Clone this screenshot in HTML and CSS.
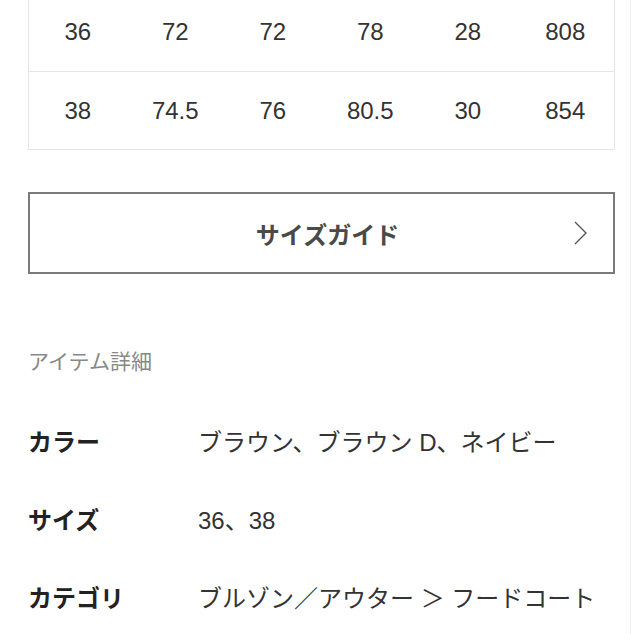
FILE: index.html
```html
<!DOCTYPE html>
<html lang="ja">
<head>
<meta charset="utf-8">
<link rel="stylesheet" href="styles.css">
</head>
<body>
<div class="page">
  <div class="size-table">
    <div class="row">
      <div class="cell">36</div><div class="cell">72</div><div class="cell">72</div><div class="cell">78</div><div class="cell">28</div><div class="cell">808</div>
    </div>
    <div class="row">
      <div class="cell">38</div><div class="cell">74.5</div><div class="cell">76</div><div class="cell">80.5</div><div class="cell">30</div><div class="cell">854</div>
    </div>
  </div>

  <div class="guide-btn">
    <span class="guide-label">サイズガイド</span>
    <svg class="chevron" width="13" height="24" viewBox="0 0 13 24"><path d="M1 1 L12 12 L1 23" fill="none" stroke="#555" stroke-width="1.4"/></svg>
  </div>

  <h2 class="section-title">アイテム詳細</h2>

  <div class="details">
    <div class="detail-row"><div class="label">カラー</div><div class="value">ブラウン、ブラウン D、ネイビー</div></div>
    <div class="detail-row"><div class="label">サイズ</div><div class="value">36、38</div></div>
    <div class="detail-row"><div class="label">カテゴリ</div><div class="value">ブルゾン／アウター ＞ フードコート</div></div>
  </div>
</div>
</body>
</html>
```

FILE: styles.css
```css
html, body {
  margin: 0;
  padding: 0;
  background: #fff;
}
body {
  font-family: "Liberation Sans", "Noto Sans CJK JP", sans-serif;
  color: #333;
  overflow: hidden;
}
.page {
  width: 631px;
  box-sizing: border-box;
  padding: 0 15px 0 28px;
  border-right: 1px solid #efefef;
  min-height: 634px;
}
.size-table {
  margin-top: -7px;
  border: 1px solid #e6e6e6;
  border-top: none;
}
.row {
  display: grid;
  grid-template-columns: repeat(6, 1fr);
  height: 78px;
  align-items: center;
}
.row + .row {
  border-top: 1px solid #e6e6e6;
  height: 77px;
}
.cell {
  text-align: center;
  font-size: 24px;
  color: #333;
}
.guide-btn {
  margin-top: 42px;
  height: 78px;
  border: 2px solid #7a7a7a;
  display: flex;
  align-items: center;
  justify-content: center;
  padding-left: 12px;
  position: relative;
}
.guide-label {
  font-family: "Noto Sans CJK JP", sans-serif;
  font-weight: bold;
  font-size: 24px;
  color: #4a4a4a;
}
.chevron {
  position: absolute;
  right: 26px;
  top: 27px;
}
.section-title {
  margin: 71px 0 0;
  font-family: "Noto Sans CJK JP", sans-serif;
  font-weight: normal;
  font-size: 21px;
  line-height: 30px;
  color: #888;
}
.details {
  margin-top: 26px;
}
.detail-row {
  display: flex;
  align-items: center;
  height: 78px;
}
.label {
  width: 170px;
  flex: none;
  font-family: "Noto Sans CJK JP", sans-serif;
  font-weight: bold;
  font-size: 24px;
  color: #222;
}
.value {
  font-size: 24px;
  color: #333;
}
```
